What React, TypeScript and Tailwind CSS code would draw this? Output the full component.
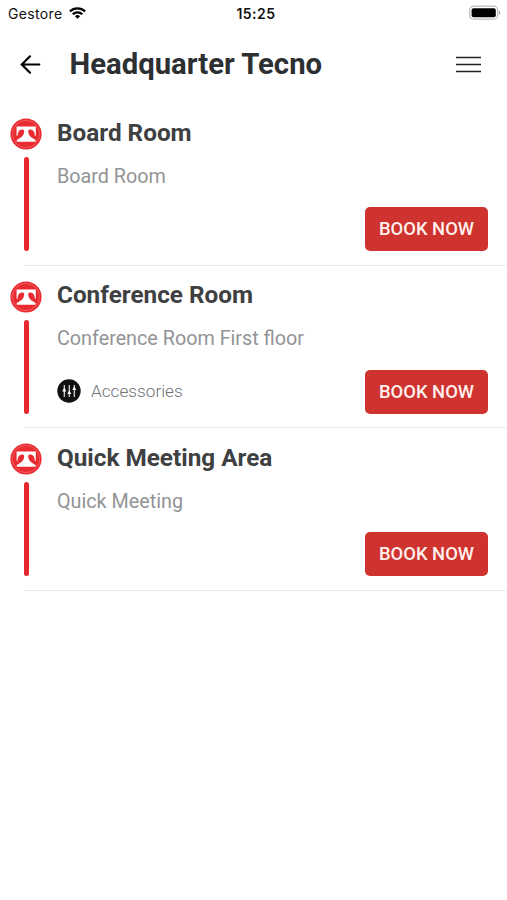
type Room = {
  name: string
  description: string
  accessories?: boolean
}

const rooms: Room[] = [
  { name: 'Board Room', description: 'Board Room' },
  { name: 'Conference Room', description: 'Conference Room First floor', accessories: true },
  { name: 'Quick Meeting Area', description: 'Quick Meeting' },
]

function WifiIcon() {
  return (
    <svg className="w-[17px] h-3" viewBox="0 0 17 12" fill="none" stroke="#000" strokeWidth="2.2">
      <path d="M.9 4.4a11 11 0 0 1 15.2 0" />
      <path d="M3.7 7.2a7 7 0 0 1 9.6 0" />
      <path d="M8.5 11.8 5.9 9.2a3.8 3.8 0 0 1 5.2 0z" fill="#000" stroke="none" />
    </svg>
  )
}

function BatteryIcon() {
  return (
    <svg className="w-8 h-4" viewBox="0 0 32 16">
      <rect x=".7" y="1.2" width="28" height="13" rx="4" fill="#fff" stroke="#bdbdbd" strokeWidth="1.3" />
      <rect x="2.6" y="3.2" width="24.2" height="9" rx="2" fill="#000" />
      <path d="M30 5.8c1.6.7 1.6 3.3 0 4z" fill="#999" />
    </svg>
  )
}

function TecnoLogo() {
  return (
    <svg className="w-8 h-8 shrink-0" viewBox="0 0 32 32">
      <circle cx="16" cy="16" r="15.6" fill="#ea2c32" />
      <circle cx="16" cy="16" r="13.6" fill="none" stroke="#f4797c" strokeWidth=".6" />
      <path
        d="M6.6 8.4h19.2v9.4h-1c-.1-3.4-1-5.4-3.2-6.1-1.9-.5-3.4.1-3.4 1.6 0 3.8 2.6 6.4 7.4 8.6v1.8H6.8v-1.8c4.8-2.2 7.4-4.8 7.4-8.6 0-1.5-1.5-2.1-3.4-1.6-2.2.7-3.1 2.7-3.2 6.1h-1z"
        fill="#fff"
      />
    </svg>
  )
}

function AccessoriesIcon() {
  return (
    <svg className="w-6 h-6" viewBox="0 0 24 24">
      <circle cx="12" cy="12" r="11.7" fill="#111" />
      <path d="M7.3 6v12M12.3 6v12M17.3 6v12" stroke="#ddd" strokeWidth="1.2" />
      <path d="m7.3 8.6 2 3.8h-4zM12.3 11.2l2 3.8h-4zM17.3 7.2l2 3.8h-4z" fill="#fff" />
    </svg>
  )
}

function StatusBar() {
  return (
    <div className="grid grid-cols-3 items-center h-[26px] mb-0.5 pl-2 pr-[6px] font-[Inter,sans-serif] text-[14px] text-[#111]">
      <div className="flex items-center gap-[6px]">
        <span className="tracking-[0.35px]">Gestore</span>
        <WifiIcon />
      </div>
      <span className="pl-[3px] text-center font-semibold tracking-[0.5px]">15:25</span>
      <div className="flex justify-end">
        <BatteryIcon />
      </div>
    </div>
  )
}

function Header() {
  return (
    <header className="flex items-center h-[73px] mb-0.5 pl-5 pr-[26.5px]">
      <svg className="w-[21px] h-5" viewBox="0 0 21 20" fill="none" stroke="#000" strokeWidth="2.2" strokeLinecap="round">
        <path d="M19.3 9.5H2M10 1.3 1.8 9.5l8.2 8.2" />
      </svg>
      <h1 className="ml-[28.5px] pt-px text-[29.3px] font-bold whitespace-nowrap text-[#2d3033]">Headquarter Tecno</h1>
      <svg className="ml-auto w-[25px] h-[17px]" viewBox="0 0 25 17" stroke="#222" strokeWidth="1.7">
        <path d="M0 1.5h25M0 8.5h25M0 15.5h25" />
      </svg>
    </header>
  )
}

function RoomRow({ room }: { room: Room }) {
  return (
    <li>
      <div className="flex h-[162.5px] ml-[10px]">
        <div className="flex flex-col items-center w-8 pt-[15px]">
          <TecnoLogo />
          <div className="mt-[7px] w-[5px] h-[94px] rounded-full bg-[#e8282f]" />
        </div>
        <div className="flex flex-col flex-1 pl-[15px]">
          <h2 className="mt-[13.5px] text-[24.3px] leading-8 font-bold text-[#3e4042]">{room.name}</h2>
          <p className="mt-[14px] text-[19.75px] leading-7 text-[#929496]">{room.description}</p>
          <div className="flex items-center mt-[16.5px] h-11 pr-[19px]">
            {room.accessories && (
              <div className="flex items-center gap-[10px] text-[17.2px] font-light text-[#6f7173]">
                <AccessoriesIcon />
                <span>Accessories</span>
              </div>
            )}
            <button className="ml-auto w-[123px] h-11 rounded-[5px] bg-[#cf332f] text-[18.4px] font-medium whitespace-nowrap text-[#fff0ed]">
              BOOK NOW
            </button>
          </div>
        </div>
      </div>
      <div className="-mt-px ml-6 h-px bg-[#ececec]" />
    </li>
  )
}

export default function App() {
  return (
    <main className="min-h-screen bg-white font-[Roboto,sans-serif]">
      <StatusBar />
      <Header />
      <ul>
        {rooms.map((room) => (
          <RoomRow key={room.name} room={room} />
        ))}
      </ul>
    </main>
  )
}
